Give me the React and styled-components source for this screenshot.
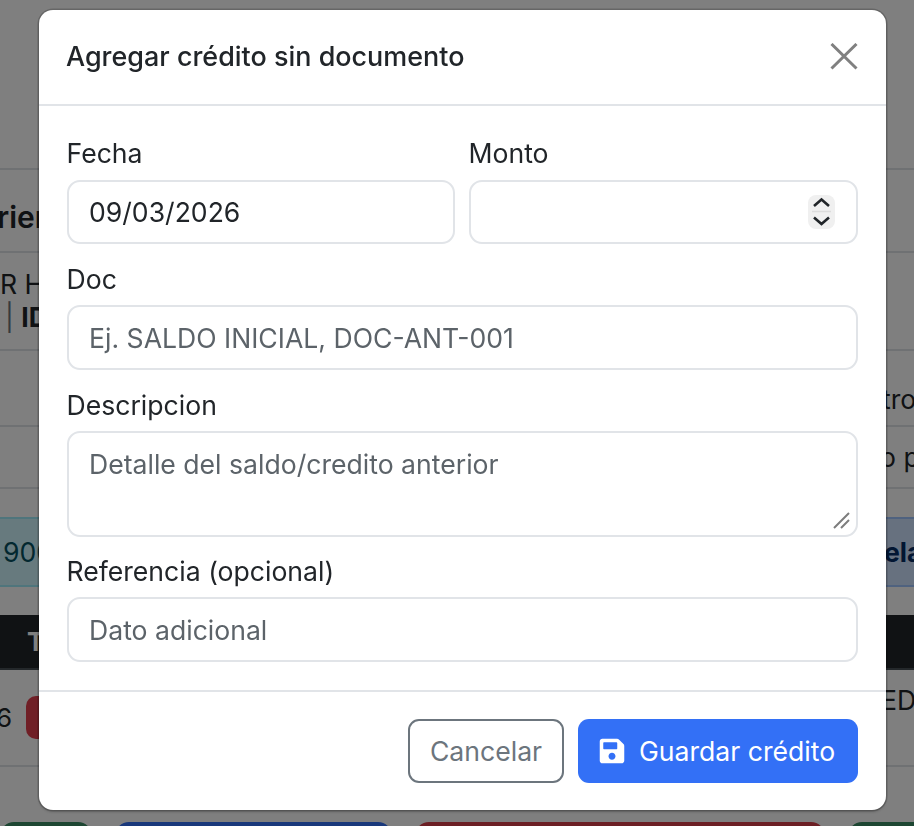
import React from "react";
import styled, { createGlobalStyle } from "styled-components";
import { FaSave } from "react-icons/fa";

const Global = createGlobalStyle`
  html, body { margin: 0; padding: 0; background: #fff; }
  body { font-family: Inter, "Liberation Sans", sans-serif; color: #212529; overflow: hidden; }
  * { box-sizing: border-box; }
`;

const Page = styled.div`
  width: 914px;
  height: 826px;
  overflow: hidden;
  display: flex;
  flex-direction: column;
  font-size: 26px;
`;
const BackRow = styled.div`
  height: ${(p) => p.$h}px;
  flex: none;
  display: flex;
  justify-content: space-between;
  align-items: center;
  border-bottom: ${(p) => (p.$line ? "2px solid #dee2e6" : "0")};
`;
const Clip = styled.div`
  width: ${(p) => p.$w}px;
  overflow: hidden;
  white-space: nowrap;
  flex: none;
  text-indent: ${(p) => p.$indent || 0}px;
  font-weight: ${(p) => p.$weight || 400};
  font-size: ${(p) => p.$size || 26.6}px;
  line-height: 33px;
  color: ${(p) => p.$color || "#212529"};
`;
const MetaCell = styled.div`
  display: flex;
  flex-direction: column;
  width: 39px;
  flex: none;
`;
const Divider = styled.span`
  color: #6c757d;
  font-weight: 400;
`;
const Notes = styled.div`
  height: 100%;
  padding-top: ${(p) => p.$top}px;
`;
const Alerts = styled.div`
  height: 70px;
  flex: none;
  margin: 28px 0;
  display: flex;
  justify-content: space-between;
`;
const Alert = styled.div`
  width: 300px;
  display: flex;
  align-items: center;
  background: ${(p) => p.$bg};
  border-top: 2px solid ${(p) => p.$line};
  border-bottom: 2px solid ${(p) => p.$line};
  padding-left: ${(p) => p.$pad}px;
`;
const DarkHead = styled.div`
  height: 55px;
  flex: none;
  background: #212529;
  display: flex;
  align-items: center;
  padding-left: 27px;
  color: #fff;
  font-weight: 700;
  font-size: 26px;
  border-bottom: 2px solid #495057;
`;
const Badge = styled.span`
  display: inline-block;
  width: 40px;
  height: 43px;
  background: #e03f4d;
  border-radius: 10px;
  flex: none;
`;
const DataLeft = styled.div`
  display: flex;
  align-items: center;
  gap: 14px;
  width: 100px;
  margin-left: -4px;
`;
const ActionBar = styled.div`
  display: flex;
  margin-top: 55px;
  gap: 23px;
  height: 30px;
  flex: none;
`;
const Action = styled.div`
  background: ${(p) => p.$bg};
  width: ${(p) => p.$w}px;
  flex: none;
  border-radius: 14px 14px 0 0;
`;

const Overlay = styled.div`
  position: fixed;
  inset: 0;
  background: rgba(0, 0, 0, 0.5);
  padding: 10px 28px 0 39px;
`;
const Modal = styled.div`
  width: 847px;
  height: 800px;
  background: #fff;
  border-radius: 14px;
  display: flex;
  flex-direction: column;
  box-shadow: 0 0 0 1.5px rgba(0, 0, 0, 0.2), 0 2px 3px rgba(0, 0, 0, 0.2);
`;
const Header = styled.div`
  height: 96px;
  flex: none;
  display: flex;
  align-items: center;
  justify-content: space-between;
  padding: 0 28px;
  border-bottom: 2px solid #e1e4e8;
`;
const Title = styled.h5`
  margin: 0 0 0 -1px;
  font-size: 26.95px;
  font-weight: 500;
  line-height: 32px;
  color: #212529;
`;
const CloseBtn = styled.button`
  border: 0;
  background: none;
  padding: 0;
  width: 28px;
  height: 28px;
  display: flex;
  cursor: pointer;
`;
const Body = styled.div`
  flex: 1;
  padding: 31px 28px 0;
  display: flex;
  flex-direction: column;
`;
const Grid = styled.div`
  display: grid;
  grid-template-columns: 388px 389px;
  gap: 14px;
`;
const Field = styled.div`
  display: flex;
  flex-direction: column;
  margin-bottom: ${(p) => p.$mb || 0}px;
`;
const Label = styled.label`
  font-size: 26.6px;
  line-height: 33px;
  margin-bottom: ${(p) => p.$mb || 9}px;
  margin-left: -0.5px;
  color: #212529;
`;
const InputWrap = styled.div`
  position: relative;
  display: flex;
`;
const Input = styled.input`
  width: 100%;
  height: ${(p) => p.$h || 64}px;
  border: 2px solid #e1e4e8;
  border-radius: 13px;
  padding: 0 20px;
  font: 400 26.6px Inter, sans-serif;
  color: #212529;
  background: #fff;
  outline: none;
  appearance: textfield;
  &::placeholder { color: #5c6369; opacity: 1; }
`;
const TextArea = styled.textarea`
  width: 100%;
  height: 106px;
  border: 2px solid #e1e4e8;
  border-radius: 13px;
  padding: 15px 20px;
  font: 400 26.6px/33px Inter, sans-serif;
  color: #212529;
  background: #fff;
  outline: none;
  resize: none;
  &::placeholder { color: #5c6369; opacity: 1; }
`;
const Spinner = styled.svg`
  position: absolute;
  right: 23px;
  top: 15px;
  width: 27px;
  height: 34px;
`;
const Grip = styled.svg`
  position: absolute;
  right: 8px;
  bottom: 8px;
  width: 17px;
  height: 17px;
`;
const Footer = styled.div`
  height: 120px;
  flex: none;
  border-top: 2px solid #e1e4e8;
  padding: 27px 28px 0;
  display: flex;
  justify-content: flex-end;
  gap: 14px;
`;
const Button = styled.button`
  height: 64px;
  border-radius: 11px;
  font: 400 26.6px Inter, sans-serif;
  display: flex;
  align-items: center;
  justify-content: center;
  gap: 13px;
  padding: ${(p) => (p.$primary ? "0 3px 0 0" : "0")};
  cursor: pointer;
  width: ${(p) => p.$w}px;
  color: ${(p) => (p.$primary ? "#fff" : "#6c757d")};
  background: ${(p) => (p.$primary ? "#3370f6" : "#fff")};
  border: ${(p) => (p.$primary ? "0" : "2px solid #6c757d")};
`;

export default function App() {
  return (
    <>
      <Global />
      <Page>
        <BackRow $h={170} $line />
        <BackRow $h={83} $line>
          <Notes $top={31}>
            <Clip $w={39} $indent={-3} $weight={600} $size={30}>rientes</Clip>
          </Notes>
        </BackRow>
        <BackRow $h={98} $line>
          <MetaCell>
            <Clip $w={39}>R Hernandez</Clip>
            <Clip $w={39} $indent={5}><Divider>|</Divider> <b>ID</b></Clip>
          </MetaCell>
        </BackRow>
        <BackRow $h={76} $line>
          <span />
          <Notes $top={32}>
            <Clip $w={30} $indent={-2}>tros</Clip>
          </Notes>
        </BackRow>
        <BackRow $h={62} $line>
          <span />
          <Clip $w={40} $indent={6}>o pago</Clip>
        </BackRow>
        <Alerts>
          <Alert $bg="#cff4fc" $line="#9eeaf9" $pad={3}>
            <Clip $w={36} $color="#055160">90000</Clip>
          </Alert>
          <Alert $bg="#cfe2ff" $line="#9ec5fe" $pad={270}>
            <Clip $w={40} $weight={700} $color="#052c65">elado</Clip>
          </Alert>
        </Alerts>
        <DarkHead>T</DarkHead>
        <BackRow $h={97} $line>
          <DataLeft><span>6</span><Badge /></DataLeft>
          <Notes $top={14}>
            <Clip $w={30} $indent={-3}>ED</Clip>
          </Notes>
        </BackRow>
        <ActionBar>
          <Action $bg="#3a8c64" $w={92} />
          <Action $bg="#3370f6" $w={277} />
          <Action $bg="#d93f48" $w={410} />
          <Action $bg="#3a8c64" $w={100} />
        </ActionBar>
      </Page>
      <Overlay>
        <Modal>
          <Header>
            <Title>Agregar crédito sin documento</Title>
            <CloseBtn aria-label="Cerrar">
              <svg width="28" height="28" viewBox="0 0 28 28" fill="none" stroke="#808080" strokeWidth="3">
                <path d="M1.5 1 L26.5 25.5 M26.5 1 L1.5 25.5" />
              </svg>
            </CloseBtn>
          </Header>
          <Body>
            <Grid>
              <Field $mb={19}>
                <Label $mb={10}>Fecha</Label>
                <Input defaultValue="09/03/2026" />
              </Field>
              <Field $mb={19}>
                <Label $mb={10}>Monto</Label>
                <InputWrap>
                  <Input />
                  <Spinner viewBox="0 0 27 34" fill="none">
                    <rect width="27" height="34" rx="8" fill="#f0f0f0" />
                    <path d="M6 11 L13.5 4.5 L21 11" stroke="#212529" strokeWidth="2.6" />
                    <path d="M6 22.5 L13.5 29 L21 22.5" stroke="#212529" strokeWidth="2.6" />
                    <path d="M4 16.5 H23" stroke="#dcdcdc" strokeWidth="1.5" />
                  </Spinner>
                </InputWrap>
              </Field>
            </Grid>
            <Field $mb={19}>
              <Label>Doc</Label>
              <Input placeholder="Ej. SALDO INICIAL, DOC-ANT-001" $h={65} />
            </Field>
            <Field $mb={18}>
              <Label>Descripcion</Label>
              <InputWrap>
                <TextArea placeholder="Detalle del saldo/credito anterior" />
                <Grip viewBox="0 0 17 17" fill="none" stroke="#7d7d7d" strokeWidth="2">
                  <path d="M1 16 L16 1 M8 16 L16 8" />
                </Grip>
              </InputWrap>
            </Field>
            <Field>
              <Label>Referencia (opcional)</Label>
              <Input placeholder="Dato adicional" $h={65} />
            </Field>
          </Body>
          <Footer>
            <Button $w={156}>Cancelar</Button>
            <Button $w={280} $primary><FaSave size={28} />Guardar crédito</Button>
          </Footer>
        </Modal>
      </Overlay>
    </>
  );
}
